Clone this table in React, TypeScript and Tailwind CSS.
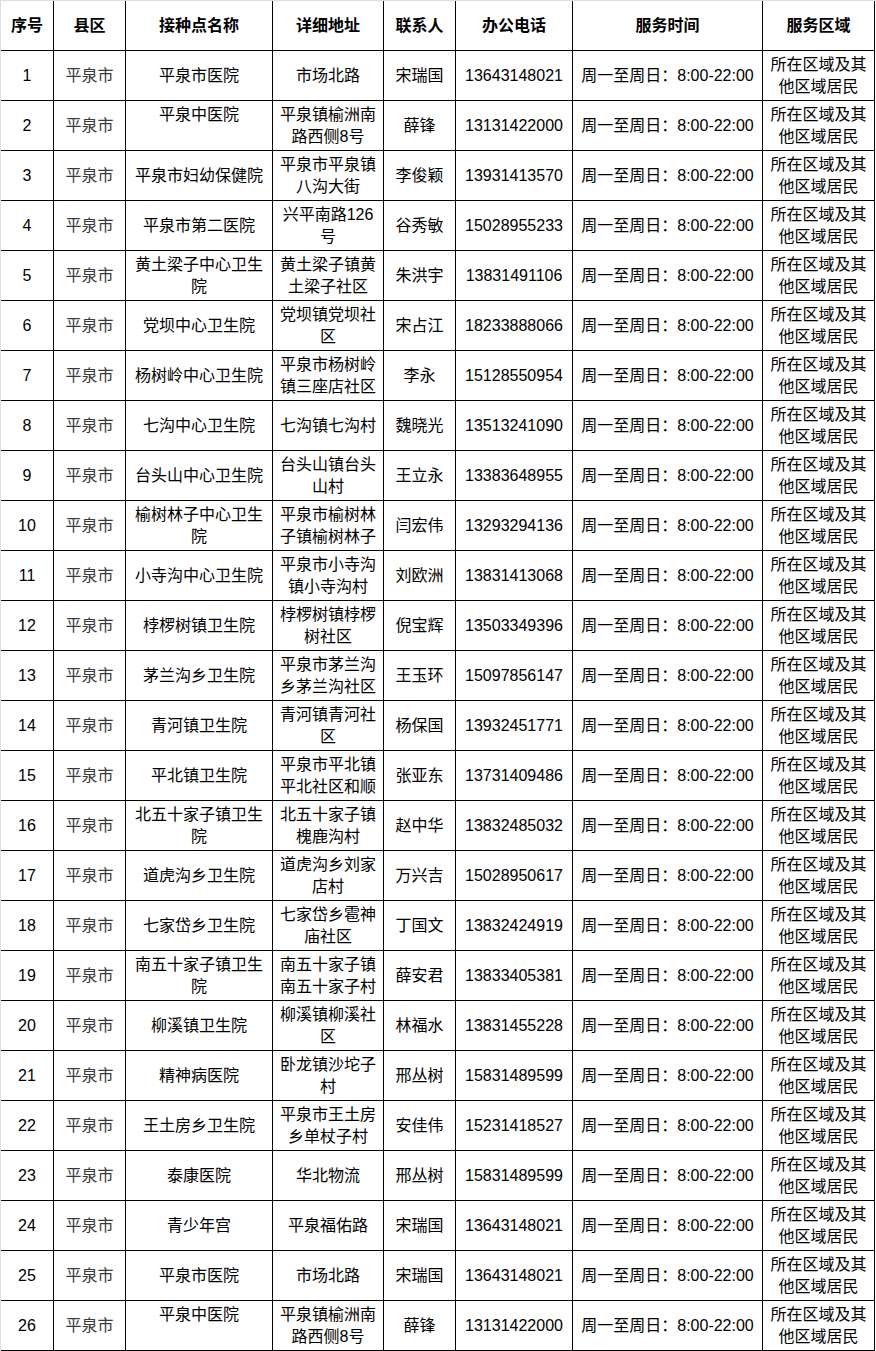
import { clsx } from "clsx";

type Site = {
  name: string;
  address: string;
  contact: string;
  phone: string;
  nameTop?: boolean;
};

const sites: Site[] = [
  { name: "平泉市医院", address: "市场北路", contact: "宋瑞国", phone: "13643148021" },
  { name: "平泉中医院", address: "平泉镇榆洲南路西侧8号", contact: "薛锋", phone: "13131422000", nameTop: true },
  { name: "平泉市妇幼保健院", address: "平泉市平泉镇八沟大街", contact: "李俊颖", phone: "13931413570" },
  { name: "平泉市第二医院", address: "兴平南路126号", contact: "谷秀敏", phone: "15028955233" },
  { name: "黄土梁子中心卫生院", address: "黄土梁子镇黄土梁子社区", contact: "朱洪宇", phone: "13831491106" },
  { name: "党坝中心卫生院", address: "党坝镇党坝社区", contact: "宋占江", phone: "18233888066" },
  { name: "杨树岭中心卫生院", address: "平泉市杨树岭镇三座店社区", contact: "李永", phone: "15128550954" },
  { name: "七沟中心卫生院", address: "七沟镇七沟村", contact: "魏晓光", phone: "13513241090" },
  { name: "台头山中心卫生院", address: "台头山镇台头山村", contact: "王立永", phone: "13383648955" },
  { name: "榆树林子中心卫生院", address: "平泉市榆树林子镇榆树林子", contact: "闫宏伟", phone: "13293294136" },
  { name: "小寺沟中心卫生院", address: "平泉市小寺沟镇小寺沟村", contact: "刘欧洲", phone: "13831413068" },
  { name: "桲椤树镇卫生院", address: "桲椤树镇桲椤树社区", contact: "倪宝辉", phone: "13503349396" },
  { name: "茅兰沟乡卫生院", address: "平泉市茅兰沟乡茅兰沟社区", contact: "王玉环", phone: "15097856147" },
  { name: "青河镇卫生院", address: "青河镇青河社区", contact: "杨保国", phone: "13932451771" },
  { name: "平北镇卫生院", address: "平泉市平北镇平北社区和顺", contact: "张亚东", phone: "13731409486" },
  { name: "北五十家子镇卫生院", address: "北五十家子镇槐鹿沟村", contact: "赵中华", phone: "13832485032" },
  { name: "道虎沟乡卫生院", address: "道虎沟乡刘家店村", contact: "万兴吉", phone: "15028950617" },
  { name: "七家岱乡卫生院", address: "七家岱乡雹神庙社区", contact: "丁国文", phone: "13832424919" },
  { name: "南五十家子镇卫生院", address: "南五十家子镇南五十家子村", contact: "薛安君", phone: "13833405381" },
  { name: "柳溪镇卫生院", address: "柳溪镇柳溪社区", contact: "林福水", phone: "13831455228" },
  { name: "精神病医院", address: "卧龙镇沙坨子村", contact: "邢丛树", phone: "15831489599" },
  { name: "王土房乡卫生院", address: "平泉市王土房乡单杖子村", contact: "安佳伟", phone: "15231418527" },
  { name: "泰康医院", address: "华北物流", contact: "邢丛树", phone: "15831489599" },
  { name: "青少年宫", address: "平泉福佑路", contact: "宋瑞国", phone: "13643148021" },
  { name: "平泉市医院", address: "市场北路", contact: "宋瑞国", phone: "13643148021" },
  { name: "平泉中医院", address: "平泉镇榆洲南路西侧8号", contact: "薛锋", phone: "13131422000", nameTop: true },
];

const headers = ["序号", "县区", "接种点名称", "详细地址", "联系人", "办公电话", "服务时间", "服务区域"];

export default function App() {
  return (
    <div className="w-[876px] bg-white font-['Liberation_Sans','Noto_Sans_CJK_SC',sans-serif] text-[16px] leading-[22px] text-black">
      <div className="grid w-[875px] grid-cols-[53px_72px_147px_111px_72px_117px_190px_112px] border-l border-t border-[#d9dfe9]">
        {headers.map((h) => (
          <Cell key={h} className="font-bold">
            {h}
          </Cell>
        ))}
        {sites.map((s, i) => (
          <Row key={i} index={i + 1} site={s} />
        ))}
      </div>
    </div>
  );
}

function Row({ index, site }: { index: number; site: Site }) {
  return (
    <>
      <Cell>{index}</Cell>
      <Cell className="text-[#3a3a3a]">平泉市</Cell>
      <Cell top={site.nameTop}>{site.name}</Cell>
      <Cell>{site.address}</Cell>
      <Cell>{site.contact}</Cell>
      <Cell className="whitespace-nowrap">{site.phone}</Cell>
      <Cell className="whitespace-nowrap">周一至周日：8:00-22:00</Cell>
      <Cell>所在区域及其他区域居民</Cell>
    </>
  );
}

function Cell({
  children,
  className,
  top,
}: {
  children: React.ReactNode;
  className?: string;
  top?: boolean;
}) {
  return (
    <div
      className={clsx(
        "flex h-[50px] justify-center overflow-hidden border-b border-r border-black px-1 text-center",
        top ? "items-start pt-[3px]" : "items-center",
        className
      )}
    >
      <span>{children}</span>
    </div>
  );
}
